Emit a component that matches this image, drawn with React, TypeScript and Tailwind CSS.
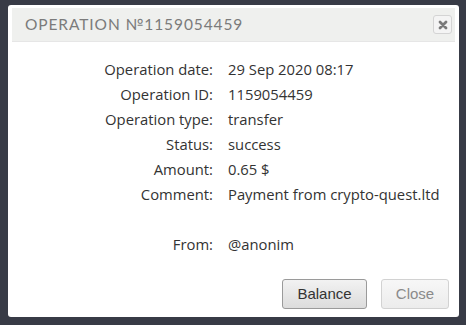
export default function App() {
  const rows: [string, string][] = [
    ["Operation date:", "29 Sep 2020 08:17"],
    ["Operation ID:", "1159054459"],
    ["Operation type:", "transfer"],
    ["Status:", "success"],
    ["Amount:", "0.65 $"],
    ["Comment:", "Payment from crypto-quest.ltd"],
    ["", ""],
    ["From:", "@anonim"],
  ];
  return (
    <div className="w-[466px] h-[325px] bg-[#383b46] pt-[5px] pl-[8px] overflow-hidden">
      <div className="w-[451px] h-[312px] bg-white rounded-[3px] p-[3px] px-[4px] flex flex-col">
        <div className="h-[34px] bg-[#eff0ee] flex items-center pl-[13px] pr-[3px] border-b border-[#e6e6e6]">
          <div
            className="text-[15.5px] text-[#7b7b7b] tracking-[0.9px] flex-1"
            style={{ fontFamily: "Lato, 'Noto Sans', sans-serif" }}
          >
            OPERATION №1159054459
          </div>
          <div className="w-[19px] h-[19px] border border-[#d4d4d4] rounded-[3px] bg-[#f4f4f4] flex items-center justify-center">
            <svg width="10" height="10" viewBox="0 0 10 10">
              <path d="M2 2 L8 8 M8 2 L2 8" stroke="#7a7a7a" strokeWidth="2.8" strokeLinecap="round" />
            </svg>
          </div>
        </div>
        <div
          className="grid grid-cols-[201px_1fr] gap-x-[15px] mt-[15px] text-[14.8px] leading-[25px] text-[#333]"
          style={{ fontFamily: "'Open Sans', sans-serif" }}
        >
          {rows.map(([k, v], i) => (
            <div key={i} className="contents">
              <div className="text-right h-[25px]">{k}</div>
              <div className="h-[25px]">{v}</div>
            </div>
          ))}
        </div>
        <div className="flex-1" />
        <div className="flex justify-end gap-[14px] pr-[6px] pb-[5px]" style={{ fontFamily: "'Liberation Sans', Arial, sans-serif" }}>
          <button className="w-[85px] h-[30px] rounded-[3px] border border-[#9a9a9a] bg-gradient-to-b from-[#f2f2f2] to-[#dcdcdc] text-[15px] text-[#333]">
            Balance
          </button>
          <button className="w-[68px] h-[30px] rounded-[3px] border border-[#d2d2d2] bg-gradient-to-b from-[#f7f7f7] to-[#ececec] text-[15px] text-[#8a8a8a]">
            Close
          </button>
        </div>
      </div>
    </div>
  );
}
